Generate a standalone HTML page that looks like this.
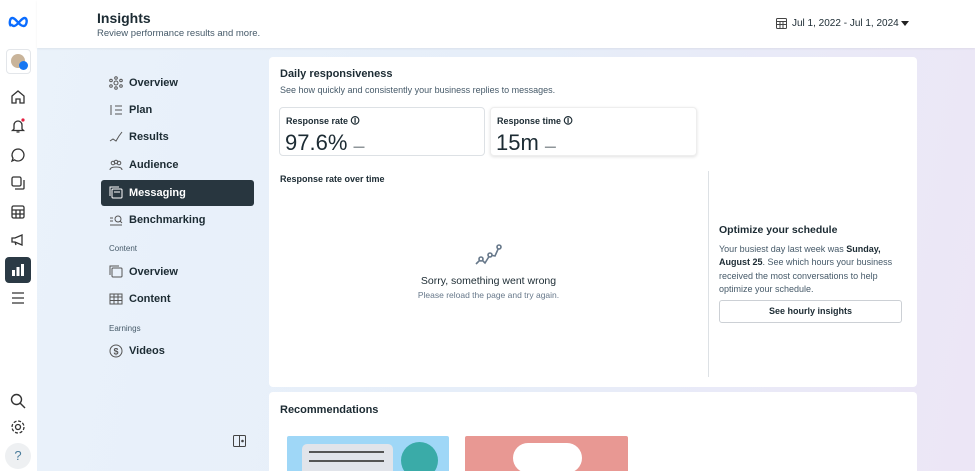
<!DOCTYPE html>
<html><head><meta charset="utf-8"><style>
*{margin:0;padding:0;box-sizing:border-box}
html{width:975px;height:471px;overflow:hidden}
body{width:975px;height:471px;overflow:hidden;font-family:"Liberation Sans",sans-serif;color:#1c2b33;position:relative;background:linear-gradient(100deg,#eaf2fa 0%,#e6eef9 50%,#ece6f6 100%)}
.rail{position:absolute;left:0;top:0;width:37px;height:471px;background:#fff}
.hdr{position:absolute;left:37px;top:0;width:938px;height:48px;background:#fff;box-shadow:0 1px 2px rgba(0,0,0,.06)}
.ic{position:absolute;left:9px;width:18px;height:18px}
.nav{position:absolute;left:101px;width:153px;height:26px;font-size:11px;font-weight:bold;display:flex;align-items:center;padding-left:8px}
.nav svg{width:14px;height:14px;margin-right:6px}
.sec{position:absolute;left:109px;font-size:8px;color:#465a69}
.card{position:absolute;background:#fff;border-radius:4px;overflow:hidden}
.mb{position:absolute;border:1px solid #dde1e5;border-radius:4px;background:#fff}
.mb b{display:block;font-size:9px;margin:6px 0 0 6px}
.mb span{display:block;font-size:22px;margin:0 0 0 5px;line-height:25px}
</style></head><body>
<div class="rail">
<svg style="position:absolute;left:8px;top:15px" width="22" height="14" viewBox="0 0 22 14"><path d="M3 11C1 9 1.5 3 4.5 3 8 3 11 11 15.5 11 19 11 20 3 16.5 3 13 3 9.5 11 6 11 4.5 11 3.5 10 3 9" fill="none" stroke="#0a6cff" stroke-width="2.4"/></svg>
<div style="position:absolute;left:6px;top:49px;width:25px;height:25px;border:1px solid #e3e6ea;border-radius:4px;background:#fff"><div style="position:absolute;left:4px;top:4px;width:14px;height:14px;border-radius:50%;background:#c9b49a"></div><div style="position:absolute;left:12px;top:11px;width:9px;height:9px;border-radius:50%;background:#1877f2"></div></div>
<svg class="ic" style="top:88px" viewBox="0 0 18 18" fill="none" stroke="#333" stroke-width="1.3"><path d="M3 8L9 3l6 5v7H11v-4H7v4H3z"/></svg>
<svg class="ic" style="top:117px" viewBox="0 0 18 18" fill="none" stroke="#333" stroke-width="1.3"><path d="M5 12V8a4 4 0 018 0v4l1.5 1.5h-11zM7.5 15h3"/><circle cx="14" cy="3" r="1.6" fill="#e41e3f" stroke="none"/></svg>
<svg class="ic" style="top:146px" viewBox="0 0 18 18" fill="none" stroke="#333" stroke-width="1.3"><path d="M9 3a6 6 0 11-3.5 10.9L3 15l1-2.8A6 6 0 019 3z"/></svg>
<svg class="ic" style="top:174px" viewBox="0 0 18 18" fill="none" stroke="#333" stroke-width="1.3"><rect x="3" y="3" width="9" height="9" rx="1.5"/><path d="M6 15h8a1 1 0 001-1V6"/></svg>
<svg class="ic" style="top:203px" viewBox="0 0 18 18" fill="none" stroke="#333" stroke-width="1.3"><rect x="3" y="3" width="12" height="12" rx="1.5"/><path d="M3 7h12M3 11h12M7 7v8M11 7v8"/></svg>
<svg class="ic" style="top:231px" viewBox="0 0 18 18" fill="none" stroke="#333" stroke-width="1.3"><path d="M3 7h3l7-3v10l-7-3H3zM6 11l1 3"/></svg>
<div style="position:absolute;left:5px;top:257px;width:26px;height:26px;border-radius:4px;background:#2b3a45"><svg style="position:absolute;left:6px;top:6px" width="14" height="14" viewBox="0 0 14 14" fill="#fff"><rect x="1" y="7" width="3" height="6"/><rect x="5.5" y="4" width="3" height="9"/><rect x="10" y="1" width="3" height="12"/></svg></div>
<svg class="ic" style="top:289px" viewBox="0 0 18 18" stroke="#333" stroke-width="1.3"><path d="M3 4h12M3 9h12M3 14h12"/></svg>
<svg class="ic" style="top:392px" viewBox="0 0 18 18" fill="none" stroke="#333" stroke-width="1.4"><circle cx="7.5" cy="7.5" r="5"/><path d="M11 11l5 5"/></svg>
<svg class="ic" style="top:418px" viewBox="0 0 18 18" fill="none" stroke="#333" stroke-width="1.3"><circle cx="9" cy="9" r="2.5"/><circle cx="9" cy="9" r="6" stroke-dasharray="3 1.7"/></svg>
<div style="position:absolute;left:5px;top:443px;width:26px;height:26px;border-radius:50%;background:#eef0f2;text-align:center;line-height:26px;font-size:13px;color:#4a7c9b">?</div>
</div>
<div class="hdr">
<div style="position:absolute;left:60px;top:10px;font-size:14px;font-weight:bold">Insights</div>
<div style="position:absolute;left:60px;top:28px;font-size:9.5px;color:#465a69">Review performance results and more.</div>
<svg style="position:absolute;left:739px;top:18px" width="11" height="11" viewBox="0 0 11 11" fill="none" stroke="#444"><rect x=".5" y=".5" width="10" height="10" rx="1"/><path d="M.5 3.5h10M.5 6.5h10M4 3.5v7M7 3.5v7"/></svg>
<div style="position:absolute;left:755px;top:18px;font-size:10px;color:#1c2b33">Jul 1, 2022 - Jul 1, 2024</div>
<div style="position:absolute;left:864px;top:21px;border:4px solid transparent;border-top:5px solid #222"></div>
</div>
<div class="nav" style="top:70px"><svg viewBox="0 0 14 14" fill="none" stroke="#555"><circle cx="7" cy="7" r="2"/><circle cx="7" cy="2" r="1.3"/><circle cx="7" cy="12" r="1.3"/><circle cx="2" cy="4.5" r="1.3"/><circle cx="12" cy="4.5" r="1.3"/><circle cx="2" cy="10" r="1.3"/><circle cx="12" cy="10" r="1.3"/></svg>Overview</div>
<div class="nav" style="top:97px"><svg viewBox="0 0 14 14" fill="none" stroke="#555"><path d="M6 3h7M6 7h7M6 11h7M2 2v10"/></svg>Plan</div>
<div class="nav" style="top:124px"><svg viewBox="0 0 14 14" fill="none" stroke="#555"><path d="M1 11l3-2 3 2 3-5 3-4"/></svg>Results</div>
<div class="nav" style="top:152px"><svg viewBox="0 0 14 14" fill="none" stroke="#555"><circle cx="4" cy="5" r="1.8"/><circle cx="10" cy="5" r="1.8"/><circle cx="7" cy="4" r="1.8"/><path d="M1 12c0-3 5-3 6-3s6 0 6 3"/></svg>Audience</div>
<div class="nav" style="top:180px;background:#28363f;color:#fff;border-radius:3px"><svg viewBox="0 0 14 14" fill="none" stroke="#fff"><rect x="3" y="3" width="10" height="9" rx="1"/><path d="M1 10V1h9M5 6h6"/></svg>Messaging</div>
<div class="nav" style="top:207px"><svg viewBox="0 0 14 14" fill="none" stroke="#555"><circle cx="9" cy="6" r="3"/><path d="M11 8l2 2M1 5h3M1 8h3M1 12h12"/></svg>Benchmarking</div>
<div class="sec" style="top:244px">Content</div>
<div class="nav" style="top:259px"><svg viewBox="0 0 14 14" fill="none" stroke="#555"><rect x="3" y="3" width="10" height="9" rx="1"/><path d="M1 10V1h9"/></svg>Overview</div>
<div class="nav" style="top:286px"><svg viewBox="0 0 14 14" fill="none" stroke="#555"><rect x="1" y="2" width="12" height="10"/><path d="M1 5h12M1 8.5h12M5 2v10M9 2v10"/></svg>Content</div>
<div class="sec" style="top:324px">Earnings</div>
<div class="nav" style="top:338px"><svg viewBox="0 0 14 14" fill="none" stroke="#555"><circle cx="7" cy="7" r="6"/><text x="7" y="10.5" font-size="9" text-anchor="middle" fill="#555" stroke="none" font-family="Liberation Sans">$</text></svg>Videos</div>
<svg style="position:absolute;left:233px;top:435px" width="13" height="12" viewBox="0 0 13 12" fill="none" stroke="#444"><rect x=".5" y=".5" width="12" height="11" rx="1"/><path d="M6.5 .5v11"/><circle cx="9.5" cy="6" r=".8" fill="#444"/></svg>

<div class="card" style="left:269px;top:57px;width:648px;height:330px">
<div style="position:absolute;left:11px;top:11px;font-size:11px;font-weight:bold">Daily responsiveness</div>
<div style="position:absolute;left:11px;top:28px;font-size:9px;color:#465a69">See how quickly and consistently your business replies to messages.</div>
<div class="mb" style="left:10px;top:50px;width:206px;height:49px"><b>Response rate &#x1F6C8;</b><span>97.6% <small style="font-size:11px">—</small></span></div>
<div class="mb" style="left:221px;top:50px;width:207px;height:49px;box-shadow:0 1px 3px rgba(0,0,0,.12);border-color:#eee"><b>Response time &#x1F6C8;</b><span>15m <small style="font-size:11px">—</small></span></div>
<div style="position:absolute;left:11px;top:117px;font-size:9px;font-weight:bold">Response rate over time</div>
<div style="position:absolute;left:439px;top:114px;width:1px;height:206px;background:#dde1e5"></div>
<svg style="position:absolute;left:205px;top:186px" width="28" height="24" viewBox="0 0 28 24" fill="none" stroke="#67788a" stroke-width="1.6"><path d="M2 21l5-5 4 4 5-8 5 1 4-9"/><circle cx="7" cy="16" r="2" fill="#fff"/><circle cx="16" cy="12" r="2" fill="#fff"/><circle cx="25" cy="4" r="2" fill="#fff"/></svg>
<div style="position:absolute;left:0;width:439px;top:218px;text-align:center;font-size:10.5px">Sorry, something went wrong</div>
<div style="position:absolute;left:0;width:439px;top:233px;text-align:center;font-size:8.5px;color:#67788a">Please reload the page and try again.</div>
<div style="position:absolute;left:450px;top:167px;font-size:10.5px;font-weight:bold">Optimize your schedule</div>
<div style="position:absolute;left:450px;top:186px;width:185px;font-size:9px;line-height:13.3px;color:#465a69">Your busiest day last week was <b style="color:#1c2b33">Sunday, August 25</b>. See which hours your business received the most conversations to help optimize your schedule.</div>
<div style="position:absolute;left:450px;top:243px;width:183px;height:23px;border:1px solid #ccd0d5;border-radius:3px;text-align:center;line-height:21px;font-size:9px;font-weight:bold">See hourly insights</div>
</div>

<div class="card" style="left:269px;top:392px;width:648px;height:79px;border-radius:4px 4px 0 0">
<div style="position:absolute;left:11px;top:12px;font-size:11px;font-weight:bold">Recommendations</div>
<div style="position:absolute;left:18px;top:44px;width:162px;height:40px;background:#9fd7f7;border-radius:2px;overflow:hidden"><div style="position:absolute;left:15px;top:8px;width:91px;height:40px;background:#e1e4ea;border-radius:5px"></div><div style="position:absolute;left:22px;top:15px;width:75px;height:2px;background:#555"></div><div style="position:absolute;left:22px;top:24px;width:75px;height:2px;background:#555"></div><div style="position:absolute;left:114px;top:6px;width:37px;height:37px;border-radius:50%;background:#3aaba8"></div></div>
<div style="position:absolute;left:196px;top:44px;width:163px;height:40px;background:#e89893;border-radius:2px;overflow:hidden"><div style="position:absolute;left:48px;top:7px;width:69px;height:30px;background:#fff;border-radius:15px"></div></div>
</div>
</body></html>
